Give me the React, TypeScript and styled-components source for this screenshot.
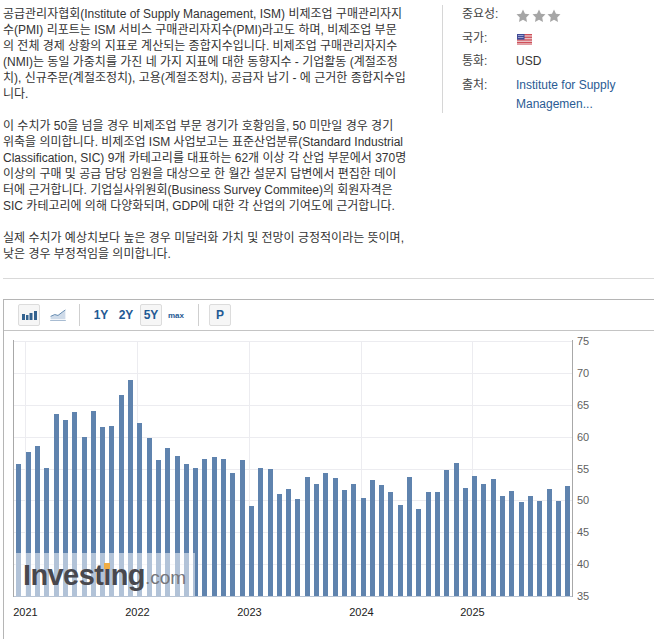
import React from "react";
import styled, { createGlobalStyle } from "styled-components";

const GlobalStyle = createGlobalStyle`
  html, body {
    margin: 0;
    padding: 0;
    background: #fff;
  }
  body {
    font-family: "Liberation Sans", "Noto Sans CJK KR", Arial, sans-serif;
    font-size: 12px;
    color: #333;
  }
`;

const descriptionLines = [
  "공급관리자협회(Institute of Supply Management, ISM) 비제조업 구매관리자지",
  "수(PMI) 리포트는 ISM 서비스 구매관리자지수(PMI)라고도 하며, 비제조업 부문",
  "의 전체 경제 상황의 지표로 계산되는 종합지수입니다. 비제조업 구매관리자지수",
  "(NMI)는 동일 가중치를 가진 네 가지 지표에 대한 동향지수 - 기업활동 (계절조정",
  "치), 신규주문(계절조정치), 고용(계절조정치), 공급자 납기 - 에 근거한 종합지수입",
  "니다.",
  "",
  "이 수치가 50을 넘을 경우 비제조업 부문 경기가 호황임을, 50 미만일 경우 경기",
  "위축을 의미합니다. 비제조업 ISM 사업보고는 표준산업분류(Standard Industrial",
  "Classification, SIC) 9개 카테고리를 대표하는 62개 이상 각 산업 부문에서 370명",
  "이상의 구매 및 공급 담당 임원을 대상으로 한 월간 설문지 답변에서 편집한 데이",
  "터에 근거합니다. 기업실사위원회(Business Survey Commitee)의 회원자격은",
  "SIC 카테고리에 의해 다양화되며, GDP에 대한 각 산업의 기여도에 근거합니다.",
  "",
  "실제 수치가 예상치보다 높은 경우 미달러화 가치 및 전망이 긍정적이라는 뜻이며,",
  "낮은 경우 부정적임을 의미합니다.",
];

// [x, top] read off the reference, bottoms all sit on the 35 line
const bars: [number, number][] = [
  [16, 464], [26, 452], [35, 446], [44, 468], [54, 414], [63, 420], [72, 412], [82, 437],
  [91, 411], [100, 427], [109, 426], [119, 395], [128, 380], [137, 423], [147, 438], [156, 460],
  [165, 448], [175, 456], [184, 464], [193, 468], [202, 459], [212, 457], [221, 459], [230, 473],
  [240, 460], [249, 506], [258, 468], [268, 469], [277, 494], [286, 489], [295, 499], [305, 477],
  [314, 484], [323, 473], [333, 478], [342, 490], [351, 484], [361, 498], [370, 480], [379, 485],
  [388, 492], [398, 505], [407, 477], [416, 509], [426, 492], [435, 492], [444, 470], [454, 463],
  [463, 488], [472, 476], [481, 484], [491, 479], [500, 496], [509, 491], [519, 502], [528, 496],
  [537, 501], [547, 489], [556, 501], [565, 486],
];

const yTicks = [
  { label: "75", y: 341 },
  { label: "70", y: 373 },
  { label: "65", y: 405 },
  { label: "60", y: 437 },
  { label: "55", y: 469 },
  { label: "50", y: 500 },
  { label: "45", y: 532 },
  { label: "40", y: 564 },
  { label: "35", y: 596 },
];

const xTicks = [
  { label: "2021", x: 25.5 },
  { label: "2022", x: 137.5 },
  { label: "2023", x: 249.5 },
  { label: "2024", x: 361.5 },
  { label: "2025", x: 472.5 },
];

// chart svg starts at page y=331 and x=4
const CHART_X = 4;
const CHART_Y = 331;

function Star() {
  return (
    <svg width="14" height="13" viewBox="0 0 24 23">
      <path
        d="M12 0.8l3.5 7.4 8 1.1-5.8 5.6 1.4 8-7.1-3.9-7.1 3.9 1.4-8L0.5 9.3l8-1.1z"
        fill="#a6a6a6"
      />
    </svg>
  );
}

function UsFlag() {
  const stripes = [0, 2, 4, 6, 8, 10, 12];
  return (
    <svg width="15" height="11" viewBox="0 0 15 11">
      <rect width="15" height="11" fill="#f4f1f1" />
      {stripes.map((s) => (
        <rect key={s} y={s * 0.8} width="15" height="0.85" fill="#c8333f" />
      ))}
      <rect width="7.5" height="5.6" fill="#3f4a96" />
      <rect x="1" y="1" width="5.5" height="1" fill="#9aa0cf" />
      <rect x="1" y="3" width="5.5" height="1" fill="#9aa0cf" />
    </svg>
  );
}

function BarsIcon() {
  return (
    <svg width="15" height="9" viewBox="0 0 15 9">
      <g fill="#33628f">
        <rect x="0" y="3" width="3" height="6" />
        <rect x="4" y="4" width="2.5" height="5" />
        <rect x="7.5" y="2" width="3" height="7" />
        <rect x="12" y="0" width="3" height="9" />
      </g>
    </svg>
  );
}

function AreaIcon() {
  return (
    <svg width="16" height="12" viewBox="0 0 17 13">
      <path d="M0.5 8L5 6l3.5 1L13 3.5 16.5 1v10H.5z" fill="#cfdbe9" />
      <path d="M0.5 8L5 6l3.5 1L13 3.5 16.5 1" fill="none" stroke="#5b83ab" strokeWidth="1" />
      <path d="M0 12.5h17" stroke="#9db4cc" strokeWidth="1" />
    </svg>
  );
}

export default function App() {
  return (
    <>
      <GlobalStyle />
      <Page>
        <TopRow>
          <Description>
            {descriptionLines.map((line, i) => (
              <DescLine key={i}>{line}</DescLine>
            ))}
          </Description>
          <InfoPanel>
            <InfoRow>
              <InfoLabel>중요성:</InfoLabel>
              <Stars>
                <Star />
                <Star />
                <Star />
              </Stars>
            </InfoRow>
            <InfoRow>
              <InfoLabel>국가:</InfoLabel>
              <FlagBox>
                <UsFlag />
              </FlagBox>
            </InfoRow>
            <InfoRow>
              <InfoLabel>통화:</InfoLabel>
              <InfoValue>USD</InfoValue>
            </InfoRow>
            <InfoRow>
              <InfoLabel>출처:</InfoLabel>
              <SourceLink href="#">
                Institute for Supply
                <br />
                Managemen...
              </SourceLink>
            </InfoRow>
          </InfoPanel>
        </TopRow>
        <Divider />
        <ChartBox>
          <Toolbar>
            <ToolButton $active>
              <BarsIcon />
            </ToolButton>
            <ToolButton>
              <AreaIcon />
            </ToolButton>
            <ToolSep />
            <RangeButton>1Y</RangeButton>
            <RangeButton>2Y</RangeButton>
            <RangeButton $active>5Y</RangeButton>
            <RangeButton $small>max</RangeButton>
            <ToolSep />
            <RangeButton $active>P</RangeButton>
          </Toolbar>
          <ChartArea>
            <svg width="650" height="308" viewBox={`${CHART_X} ${CHART_Y} 650 308`}>
              {yTicks.map((t) => (
                <line key={t.label} x1="14" x2="572" y1={t.y + 0.5} y2={t.y + 0.5} stroke="#ececf0" />
              ))}
              {xTicks.map((t) => (
                <line key={t.label} x1={t.x} x2={t.x} y1="341" y2="596" stroke="#ececf0" />
              ))}
              <line x1="13.5" x2="13.5" y1="340" y2="597" stroke="#a8a8a8" />
              <line x1="572.5" x2="572.5" y1="340" y2="597" stroke="#a8a8a8" />
              {bars.map(([x, top]) => (
                <rect key={x} x={x} y={top} width="5" height={596 - top} fill="#5f83ae" />
              ))}
              <line x1="14" x2="572" y1="596.5" y2="596.5" stroke="#b8c4d4" />
              {yTicks.map((t) => (
                <text key={t.label} x="577" y={t.y + 4} fontSize="11" fill="#5f5f5f" fontFamily="Liberation Sans">
                  {t.label}
                </text>
              ))}
              {xTicks.map((t) => (
                <text key={t.label} x={t.x} y="616" fontSize="11" textAnchor="middle" fill="#222" fontFamily="Liberation Sans">
                  {t.label}
                </text>
              ))}
            </svg>
            <Watermark>
              <LogoWord>
                Investing
                <LogoDot />
              </LogoWord>
              <LogoCom>.com</LogoCom>
            </Watermark>
          </ChartArea>
        </ChartBox>
      </Page>
    </>
  );
}

const Page = styled.div`
  width: 654px;
  height: 639px;
  overflow: hidden;
  box-sizing: border-box;
  padding: 5px 0 0 3px;
`;

const TopRow = styled.div`
  display: flex;
  align-items: flex-start;
`;

const Description = styled.div`
  width: 439px;
  height: 265px;
  line-height: 16px;
  color: #333;
  padding-top: 1px;
  box-sizing: border-box;
`;

const DescLine = styled.div`
  height: 16px;
  white-space: nowrap;
`;

const InfoPanel = styled.div`
  width: 190px;
  height: 108px;
  border-left: 1px solid #d6d6d6;
  padding: 0 0 0 19px;
  display: flex;
  flex-direction: column;
`;

const InfoRow = styled.div`
  display: flex;
  min-height: 23.7px;
  line-height: 19px;
`;

const InfoLabel = styled.div`
  width: 54px;
  flex: none;
  color: #444;
`;

const InfoValue = styled.div`
  color: #333;
`;

const Stars = styled.div`
  display: flex;
  gap: 1.5px;
  padding-top: 4px;
`;

const FlagBox = styled.div`
  padding: 3px 0 0 1px;
`;

const SourceLink = styled.a`
  color: #2a5b94;
  text-decoration: none;
`;

const Divider = styled.div`
  width: 651px;
  height: 1px;
  background: #d9d9d9;
  margin: 8px 0 20px;
`;

const ChartBox = styled.div`
  border-left: 1px solid #b5b5b5;
  border-top: 1px solid #b5b5b5;
`;

const Toolbar = styled.div`
  height: 30px;
  border-bottom: 1px solid #c4c4c4;
  display: flex;
  align-items: center;
  padding-left: 14px;
  box-sizing: content-box;
`;

const ToolButton = styled.div<{ $active?: boolean }>`
  width: 22px;
  height: 22px;
  box-sizing: border-box;
  display: flex;
  align-items: center;
  justify-content: center;
  margin-right: 7px;
  border: 1px solid ${(p) => (p.$active ? "#dcdcdc" : "transparent")};
  border-radius: 2px;
  background: ${(p) => (p.$active ? "#f6f6f6" : "transparent")};
`;

const ToolSep = styled.div`
  width: 1px;
  height: 22px;
  background: #cfcfcf;
  margin: 0 10px 0 3px;
`;

const RangeButton = styled.div<{ $active?: boolean; $small?: boolean }>`
  width: 22px;
  height: 22px;
  box-sizing: border-box;
  display: flex;
  align-items: center;
  justify-content: center;
  margin-right: ${(p) => (p.$small ? "8px" : "3px")};
  border: 1px solid ${(p) => (p.$active ? "#dcdcdc" : "transparent")};
  border-radius: 2px;
  background: ${(p) => (p.$active ? "#f6f6f6" : "transparent")};
  color: #1f5a94;
  font-weight: bold;
  font-size: ${(p) => (p.$small ? "8px" : "12px")};
`;

const ChartArea = styled.div`
  position: relative;
  line-height: 0;
`;

const Watermark = styled.div`
  position: absolute;
  left: 11px;
  top: 222px;
  width: 180px;
  height: 43px;
  background: rgba(255, 255, 255, 0.52);
  display: flex;
  align-items: center;
  padding-left: 8px;
  box-sizing: border-box;
  font-family: "Liberation Sans", Arial, sans-serif;
`;

const LogoWord = styled.span`
  position: relative;
  font-size: 29px;
  line-height: 30px;
  font-weight: bold;
  letter-spacing: -0.6px;
  color: #48484e;
`;

const LogoDot = styled.i`
  position: absolute;
  left: 81px;
  top: 3px;
  width: 6px;
  height: 6px;
  background: #f0ad45;
`;

const LogoCom = styled.span`
  font-size: 19px;
  line-height: 18px;
  margin-top: 7px;
  color: #77777c;
`;
